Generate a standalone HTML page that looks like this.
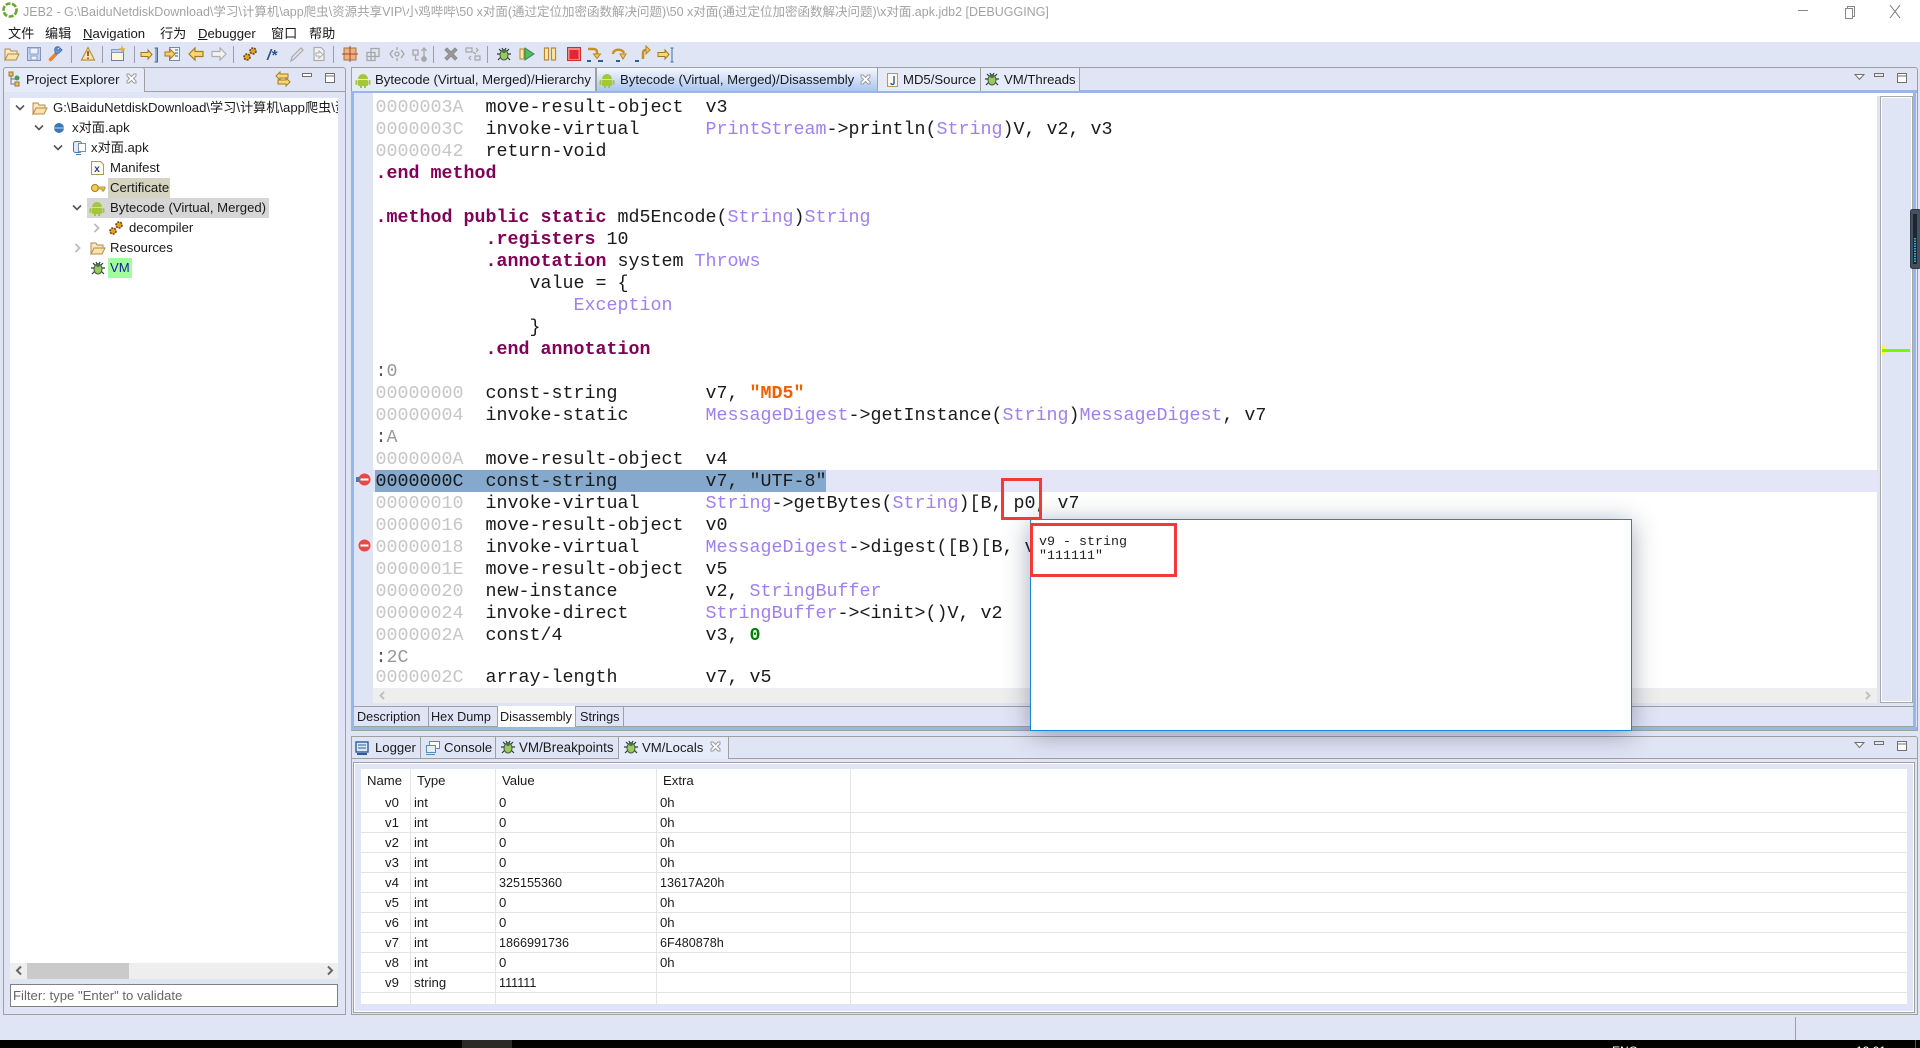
<!DOCTYPE html>
<html lang="zh">
<head>
<meta charset="utf-8">
<title>JEB2</title>
<style>
html,body{margin:0;padding:0;width:1920px;height:1048px;overflow:hidden;background:#e0e5f5;font-family:"Liberation Sans","Noto Sans CJK SC",sans-serif;font-size:13px;color:#1a1a1a}
div,span{box-sizing:border-box}
.a{position:absolute}
.t{position:absolute;white-space:pre;height:20px;line-height:20px;font-size:13.15px}
.c{position:absolute;left:375.500px;height:22px;line-height:22px;white-space:pre;font-family:"Liberation Mono",monospace;font-size:18.33px;color:#1a1a1a;margin-top:2px}
.g{color:#c6c6c6}.p{color:#a080f0}.d{color:#7f0055;font-weight:bold}.s{color:#f06000;font-weight:bold}.n{color:#008000;font-weight:bold}
.m{font-size:12.6px}
.vl{position:absolute;width:1px;background:#e4e4e4;top:769px;height:235px}
.hl{position:absolute;left:361px;width:1546px;height:1px;background:#e4e4e4}
.tab{position:absolute;border:1px solid #a0a0a0;border-bottom:0}
</style>
</head>
<body>
<!-- title + menu -->
<div class="a" style="left:0;top:0;width:1920px;height:42px;background:#fff"></div>
<div class="t" style="left:23px;top:2px;color:#a3a3a3;font-size:12.5px">JEB2 - G:\BaiduNetdiskDownload\学习\计算机\app爬虫\资源共享VIP\小鸡哔哔\50 x对面(通过定位加密函数解决问题)\50 x对面(通过定位加密函数解决问题)\x对面.apk.jdb2 [DEBUGGING]</div>
<div class="t" style="left:8px;top:24px">文件</div>
<div class="t" style="left:45px;top:24px">编辑</div>
<div class="t" style="left:83px;top:24px"><u>N</u>avigation</div>
<div class="t" style="left:160px;top:24px">行为</div>
<div class="t" style="left:198px;top:24px"><u>D</u>ebugger</div>
<div class="t" style="left:271px;top:24px">窗口</div>
<div class="t" style="left:309px;top:24px">帮助</div>

<!-- left panel -->
<div class="a" style="left:3px;top:67px;width:343px;height:948px;border:1px solid #a0a0a0;border-radius:3px 3px 0 0"></div>
<div class="a" style="left:4px;top:91px;width:341px;height:1px;background:#a0a0a0"></div>
<div class="tab" style="left:3px;top:67px;width:142px;height:25px;background:#e6ebf9;border-radius:3px 3px 0 0"></div>
<div class="t" style="left:26px;top:70px">Project Explorer</div>
<div class="a" style="left:10px;top:98px;width:328px;height:865px;background:#fff"></div>
<div class="a" style="left:10px;top:963px;width:328px;height:16px;background:#eee"></div>
<div class="a" style="left:27px;top:963px;width:102px;height:16px;background:#cacaca"></div>
<div class="a" style="left:10px;top:984px;width:328px;height:23px;background:#fff;border:1px solid #808080"></div>
<div class="t" style="left:13px;top:986px;color:#666">Filter: type "Enter" to validate</div>
<div class="a" style="left:108px;top:178px;width:62px;height:20px;background:#d4d4c0"></div>
<div class="a" style="left:87px;top:198px;width:182px;height:20px;background:#d6d6d6"></div>
<div class="a" style="left:108px;top:258px;width:24px;height:20px;background:#a0ffa0"></div>
<div class="a" style="left:53px;top:98px;width:285px;height:20px;overflow:hidden"><span class="t" style="left:0;top:0">G:\BaiduNetdiskDownload\学习\计算机\app爬虫\资源共享VIP</span></div>
<div class="t" style="left:72px;top:118px">x对面.apk</div>
<div class="t" style="left:91px;top:138px">x对面.apk</div>
<div class="t" style="left:110px;top:158px">Manifest</div>
<div class="t" style="left:110px;top:178px">Certificate</div>
<div class="t" style="left:110px;top:198px">Bytecode (Virtual, Merged)</div>
<div class="t" style="left:129px;top:218px">decompiler</div>
<div class="t" style="left:110px;top:238px">Resources</div>
<div class="t" style="left:110px;top:258px;color:#1a1a9a">VM</div>

<!-- editor panel -->
<div class="a" style="left:351px;top:67px;width:1567px;height:664px;border:1px solid #a0a0a0;border-radius:3px 3px 0 0"></div>
<div class="a" style="left:351px;top:90px;width:1566px;height:3px;background:#9ab6e8"></div>
<div class="a" style="left:351px;top:90px;width:3px;height:640px;background:#9ab6e8"></div>
<div class="a" style="left:1913px;top:90px;width:3px;height:640px;background:#9ab6e8"></div>
<div class="a" style="left:351px;top:727px;width:1566px;height:3px;background:#9ab6e8"></div>
<div class="a" style="left:354px;top:706px;width:1560px;height:1px;background:#a0a0a0"></div>
<div class="a" style="left:354px;top:726px;width:1560px;height:1px;background:#a0a0a0"></div>
<div class="tab" style="left:351px;top:67px;width:245px;height:24px;background:#e6ebf9"></div>
<div class="tab" style="left:596px;top:67px;width:282px;height:24px;background:linear-gradient(#f4f7ff,#a9c5f0)"></div>
<div class="tab" style="left:877px;top:67px;width:104px;height:24px;background:#e6ebf9"></div>
<div class="tab" style="left:980px;top:67px;width:100px;height:24px;background:#e6ebf9"></div>
<div class="t" style="left:375px;top:70px">Bytecode (Virtual, Merged)/Hierarchy</div>
<div class="t" style="left:620px;top:70px">Bytecode (Virtual, Merged)/Disassembly</div>
<div class="t" style="left:903px;top:70px">MD5/Source</div>
<div class="t" style="left:1004px;top:70px">VM/Threads</div>

<div class="a" style="left:354px;top:93px;width:1559px;height:613px;background:#e0e5f5"></div>
<div class="a" style="left:373px;top:96px;width:1504px;height:592px;background:#fff"></div>
<div class="a" style="left:373px;top:93px;width:1540px;height:3px;background:#fff"></div>
<div class="a" style="left:373px;top:470px;width:1504px;height:22px;background:#e4e6f8"></div>
<div class="a" style="left:375px;top:470px;width:451px;height:22px;background:#84a9cc"></div>
<div class="a" style="left:373px;top:688px;width:1504px;height:15px;background:#eee"></div>
<div class="a" style="left:1880px;top:96px;width:33px;height:607px;background:#e0e5f5;border:1px solid #a8a8a8;box-shadow:inset 0 0 0 1px #fff"></div>
<div class="a" style="left:1882px;top:349px;width:28px;height:3px;background:#70ff00"></div>

<div class="c" style="top:95px"><span class="g">0000003A</span>  move-result-object  v3</div>
<div class="c" style="top:117px"><span class="g">0000003C</span>  invoke-virtual      <span class="p">PrintStream</span>-&gt;println(<span class="p">String</span>)V, v2, v3</div>
<div class="c" style="top:139px"><span class="g">00000042</span>  return-void</div>
<div class="c d" style="top:161px">.end method</div>
<div class="c" style="top:205px"><span class="d">.method public static</span> md5Encode(<span class="p">String</span>)<span class="p">String</span></div>
<div class="c" style="top:227px">          <span class="d">.registers</span> 10</div>
<div class="c" style="top:249px">          <span class="d">.annotation</span> system <span class="p">Throws</span></div>
<div class="c" style="top:271px">              value = {</div>
<div class="c" style="top:293px">                  <span class="p">Exception</span></div>
<div class="c" style="top:315px">              }</div>
<div class="c" style="top:337px">          <span class="d">.end annotation</span></div>
<div class="c" style="top:359px"><span style="color:#555">:</span><span class="g" style="color:#999">0</span></div>
<div class="c" style="top:381px"><span class="g">00000000</span>  const-string        v7, <span class="s">"MD5"</span></div>
<div class="c" style="top:403px"><span class="g">00000004</span>  invoke-static       <span class="p">MessageDigest</span>-&gt;getInstance(<span class="p">String</span>)<span class="p">MessageDigest</span>, v7</div>
<div class="c" style="top:425px"><span style="color:#555">:</span><span class="g" style="color:#999">A</span></div>
<div class="c" style="top:447px"><span class="g">0000000A</span>  move-result-object  v4</div>
<div class="c" style="top:469px">0000000C  const-string        v7, "UTF-8"</div>
<div class="c" style="top:491px"><span class="g">00000010</span>  invoke-virtual      <span class="p">String</span>-&gt;getBytes(<span class="p">String</span>)[B, p0, v7</div>
<div class="c" style="top:513px"><span class="g">00000016</span>  move-result-object  v0</div>
<div class="c" style="top:535px"><span class="g">00000018</span>  invoke-virtual      <span class="p">MessageDigest</span>-&gt;digest([B)[B, v</div>
<div class="c" style="top:557px"><span class="g">0000001E</span>  move-result-object  v5</div>
<div class="c" style="top:579px"><span class="g">00000020</span>  new-instance        v2, <span class="p">StringBuffer</span></div>
<div class="c" style="top:601px"><span class="g">00000024</span>  invoke-direct       <span class="p">StringBuffer</span>-&gt;&lt;init&gt;()V, v2</div>
<div class="c" style="top:623px"><span class="g">0000002A</span>  const/4             v3, <span class="n">0</span></div>
<div class="c" style="top:645px"><span style="color:#555">:</span><span class="g" style="color:#999">2C</span></div>
<div class="c" style="top:665px;height:23px;overflow:hidden"><span class="g">0000002C</span>  array-length        v7, v5</div>

<!-- subtabs -->
<div class="a" style="left:497px;top:706px;width:79px;height:21px;background:#fff;border-left:1px solid #a0a0a0;border-right:1px solid #a0a0a0"></div>
<div class="a" style="left:428px;top:707px;width:1px;height:20px;background:#a0a0a0"></div>
<div class="a" style="left:623px;top:707px;width:1px;height:20px;background:#a0a0a0"></div>
<div class="t" style="left:357px;top:707px;font-size:12.7px">Description</div>
<div class="t" style="left:431px;top:707px;font-size:12.7px">Hex Dump</div>
<div class="t" style="left:500px;top:707px;font-size:12.7px">Disassembly</div>
<div class="t" style="left:580px;top:707px;font-size:12.7px">Strings</div>

<!-- bottom panel -->
<div class="a" style="left:351px;top:736px;width:1567px;height:279px;border:1px solid #a0a0a0;border-radius:3px 3px 0 0"></div>
<div class="a" style="left:352px;top:758px;width:1565px;height:1px;background:#a0a0a0"></div>
<div class="a" style="left:353px;top:762px;width:1562px;height:251px;border:1px solid #a0a0a0;box-shadow:inset 0 0 0 1px #fff"></div>
<div class="tab" style="left:351px;top:736px;width:70px;height:22px;background:#e0e5f5"></div>
<div class="tab" style="left:420px;top:736px;width:76px;height:22px;background:#e0e5f5"></div>
<div class="tab" style="left:495px;top:736px;width:124px;height:22px;background:#e0e5f5"></div>
<div class="tab" style="left:618px;top:736px;width:111px;height:23px;background:#e6ebf9"></div>
<div class="t" style="left:375px;top:738px">Logger</div>
<div class="t" style="left:444px;top:738px">Console</div>
<div class="t" style="left:519px;top:738px;font-size:13.4px">VM/Breakpoints</div>
<div class="t" style="left:642px;top:738px">VM/Locals</div>
<div class="a" style="left:361px;top:769px;width:1546px;height:235px;background:#fff"></div>
<div class="vl" style="left:410px"></div><div class="vl" style="left:495px"></div><div class="vl" style="left:656px"></div><div class="vl" style="left:850px"></div>
<div class="hl" style="top:812px"></div><div class="hl" style="top:832px"></div><div class="hl" style="top:852px"></div><div class="hl" style="top:872px"></div><div class="hl" style="top:892px"></div><div class="hl" style="top:912px"></div><div class="hl" style="top:932px"></div><div class="hl" style="top:952px"></div><div class="hl" style="top:972px"></div><div class="hl" style="top:992px"></div>
<div class="t" style="left:367px;top:771px">Name</div><div class="t" style="left:417px;top:771px">Type</div><div class="t" style="left:502px;top:771px">Value</div><div class="t" style="left:663px;top:771px">Extra</div>
<div class="t" style="left:385px;top:793px">v0</div><div class="t" style="left:414px;top:793px">int</div><div class="t" style="left:499px;top:793px">0</div><div class="t" style="left:660px;top:793px">0h</div>
<div class="t" style="left:385px;top:813px">v1</div><div class="t" style="left:414px;top:813px">int</div><div class="t" style="left:499px;top:813px">0</div><div class="t" style="left:660px;top:813px">0h</div>
<div class="t" style="left:385px;top:833px">v2</div><div class="t" style="left:414px;top:833px">int</div><div class="t" style="left:499px;top:833px">0</div><div class="t" style="left:660px;top:833px">0h</div>
<div class="t" style="left:385px;top:853px">v3</div><div class="t" style="left:414px;top:853px">int</div><div class="t" style="left:499px;top:853px">0</div><div class="t" style="left:660px;top:853px">0h</div>
<div class="t" style="left:385px;top:873px">v4</div><div class="t" style="left:414px;top:873px">int</div><div class="t m" style="left:499px;top:873px">325155360</div><div class="t m" style="left:660px;top:873px">13617A20h</div>
<div class="t" style="left:385px;top:893px">v5</div><div class="t" style="left:414px;top:893px">int</div><div class="t" style="left:499px;top:893px">0</div><div class="t" style="left:660px;top:893px">0h</div>
<div class="t" style="left:385px;top:913px">v6</div><div class="t" style="left:414px;top:913px">int</div><div class="t" style="left:499px;top:913px">0</div><div class="t" style="left:660px;top:913px">0h</div>
<div class="t" style="left:385px;top:933px">v7</div><div class="t" style="left:414px;top:933px">int</div><div class="t m" style="left:499px;top:933px">1866991736</div><div class="t m" style="left:660px;top:933px">6F480878h</div>
<div class="t" style="left:385px;top:953px">v8</div><div class="t" style="left:414px;top:953px">int</div><div class="t" style="left:499px;top:953px">0</div><div class="t" style="left:660px;top:953px">0h</div>
<div class="t" style="left:385px;top:973px">v9</div><div class="t" style="left:414px;top:973px">string</div><div class="t m" style="left:499px;top:973px">111111</div>

<!-- status + taskbar -->
<div class="a" style="left:1795px;top:1017px;width:1px;height:23px;background:#a0a0a0"></div>
<div class="a" style="left:0;top:1040px;width:1920px;height:8px;background:#000;overflow:hidden">
  <div class="a" style="left:462px;top:0;width:50px;height:8px;background:#2a2a2a"></div>
  <div class="t" style="left:1612px;top:1px;color:#fff;font-size:12px">ENG</div>
  <div class="t" style="left:1856px;top:1px;color:#fff;font-size:12px">12:01</div>
  <div class="a" style="left:1915px;top:0;width:1px;height:8px;background:#555"></div>
</div>

<!-- icon overlay -->
<svg class="a" style="left:0;top:0" width="1920" height="1048" viewBox="0 0 1920 1048" fill="none">
<defs>
<g id="bug"><path d="M3 3l3 3M13 3l-3 3M1 8h3M15 8h-3M2 14l3-3M14 14l-3-3M6 2l1 2M10 2L9 4" stroke="#2c3c34" stroke-width="1.2"/><ellipse cx="8" cy="9" rx="4" ry="5" fill="#9cc860" stroke="#3c5c3c"/><circle cx="8" cy="5" r="2" fill="#4c6c54"/></g>
<g id="droid"><path d="M3 7a5 5 0 0 1 10 0z" fill="#a4c639"/><rect x="3" y="8" width="10" height="6" rx="1" fill="#a4c639"/><rect x="0.5" y="8" width="2" height="5" rx="1" fill="#a4c639"/><rect x="13.5" y="8" width="2" height="5" rx="1" fill="#a4c639"/><rect x="5" y="13" width="2" height="3" fill="#a4c639"/><rect x="9" y="13" width="2" height="3" fill="#a4c639"/></g>
<g id="folder"><path d="M1 3h5l1 2h6v3H5l-4 6z" fill="#f8e6c4" stroke="#b08c4c"/><path d="M4 8h11l-3 6H1z" fill="#fae2a8" stroke="#b08c4c"/></g>
<g id="gears"><circle cx="5" cy="11" r="3" fill="#e8a020" stroke="#6a4a10" stroke-width="1.6" stroke-dasharray="2 1"/><circle cx="11" cy="5" r="3" fill="#e8a020" stroke="#6a4a10" stroke-width="1.6" stroke-dasharray="2 1"/></g>
<g id="close"><path d="M1 1l2 0 2.500 2.500L8 1h2v2L7.500 5.500 10 8v2H8L5.500 7.500 3 10H1V8l2.500-2.500L1 3z" fill="#fff" stroke="#9a9a9a"/></g>
<g id="monitor"><rect x="1" y="1" width="12" height="10" fill="#dce8f8" stroke="#2c5c9c" stroke-width="1.4"/><path d="M3 4h8M3 7h8" stroke="#2c5c9c"/><path d="M2 13h10" stroke="#2c5c9c" stroke-width="2"/></g>
</defs>

<!-- app logo -->
<circle cx="10" cy="10" r="6.500" stroke="#6aa82c" stroke-width="2.600" stroke-dasharray="5 1.500"/>
<!-- window controls -->
<path d="M1798 10.500h10" stroke="#888"/><path d="M1845.500 8.500h7v10h-7zM1847.500 8.500v-2h7v10h-2" stroke="#888"/><path d="M1890 5l10 13M1900 5l-10 13" stroke="#777"/>

<!-- toolbar -->
<g stroke="#9a9eaa"><path d="M71.500 46v17M102.500 46v17M134.500 46v17M233.500 46v17M333.500 46v17M433.500 46v17M487.500 46v17"/></g>
<use href="#folder" x="4" y="46"/>
<g transform="translate(26 46)"><rect x="1.500" y="1.500" width="13" height="13" fill="#c4d4ec" stroke="#7a94bc"/><rect x="4" y="2" width="8" height="6" fill="#eef2fa" stroke="#8aa0c0"/><rect x="5" y="10" width="6" height="4" fill="#eef2fa" stroke="#8aa0c0"/></g>
<g transform="translate(48 46)"><path d="M2.500 13.500L8 8" stroke="#ee8426" stroke-width="3.500" stroke-linecap="round"/><path d="M8 8l3-1 3-3-2-2-1 2-2 0 0-2 2-1c-3-1-5 1-4 5z" fill="#6c9ad6" stroke="#4672b0"/></g>
<g transform="translate(80 46)"><path d="M8 1.500L14.500 14h-13z" fill="#fbe7ad" stroke="#b89040" stroke-width="1.200"/><path d="M8 5v5M8 11.500v1.500" stroke="#a85020" stroke-width="1.800"/></g>
<g transform="translate(110 46)"><rect x="1.500" y="3.500" width="12" height="11" fill="#fdf7da" stroke="#6f8094"/><rect x="1.500" y="3.500" width="12" height="3" fill="#c0d4ec" stroke="#8a9ab0"/><path d="M12 0v6M9 3h6" stroke="#e8b030" stroke-width="1.500"/></g>
<g transform="translate(140 46)"><path d="M1 6.500h7V4l4 4.500L8 13v-2.500H1z" fill="#fcd870" stroke="#9c7820"/><path d="M13 2h3v14h-3M14.500 2v14" stroke="#3c6ca8" transform="translate(1.500 0)"/></g>
<g transform="translate(164 46)"><rect x="5.500" y="1.500" width="10" height="13" fill="#f2f5fb" stroke="#7c8aa0"/><path d="M11 4h3M11 7h3M11 10h3" stroke="#2c5c9c"/><path d="M1 6h5V3l5 5-5 5v-3H1z" fill="#fcd060" stroke="#a07820"/></g>
<path transform="translate(188 46)" d="M1 8l6-6v3.500h8v5H7V14z" fill="#fcd670" stroke="#a67c20" stroke-width="1.200"/>
<path transform="translate(211 46)" d="M15 8L9 2v3.500H1v5h8V14z" fill="#f3f3f3" stroke="#aeaeae" stroke-width="1.200"/>
<use href="#gears" x="242" y="46"/>
<text x="267" y="60" font-family="Liberation Sans" font-size="15" font-weight="bold" font-style="italic" fill="#2c5488">/*</text>
<g transform="translate(289 46)"><path d="M2 15l1-4L12 2l2 2-9 9z" fill="#e8e8e8" stroke="#a8a8a8" stroke-width="1.200"/></g>
<g transform="translate(311 46)"><path d="M3 1.500h7l3 3v10H3z" fill="#f2f2f2" stroke="#acacac" stroke-width="1.200"/><path d="M5 7h3V5l4 3.500L8 12v-2H5z" fill="#f8f8f8" stroke="#acacac"/></g>
<g transform="translate(342 46)"><rect x="2" y="2" width="12" height="12" fill="#eab27c" stroke="#a87440"/><path d="M8 0v16M0 8h16" stroke="#b0402c"/></g>
<g transform="translate(365 46)" stroke="#a6a6a6" stroke-width="1.300"><path d="M6 2.500h8v8H6zM2 6.500h8v8H2zM6 2.500v12M2 10.500h12"/></g>
<g transform="translate(389 46)" stroke="#a6a6a6" stroke-width="1.300"><path d="M4 4L1 8l3 4M12 4l3 4-3 4"/><circle cx="8" cy="8" r="2"/><path d="M8 1v3M8 12v3"/></g>
<g transform="translate(412 46)" stroke="#a6a6a6" stroke-width="1.300"><path d="M1 4h5v5H1zM3.500 9v5h3M12 14V3M9.500 5L12 2l2.500 3"/><circle cx="12" cy="13" r="2.200" fill="#a6a6a6"/></g>
<path transform="translate(443 46)" d="M2 4l2-2 4 4 4-4 2 2-4 4 4 4-2 2-4-4-4 4-2-2 4-4z" fill="#9a9a9a" stroke="#8c8c8c"/>
<g transform="translate(465 46)" stroke="#a6a6a6" stroke-width="1.200"><path d="M1 2h6v4H1zM10 10h5v4h-5zM8 6l3 2M11 2l2 2-2 2M6 10L4 12l2 2"/></g>
<use href="#bug" x="496" y="46"/>
<g transform="translate(519 46)"><rect x="1" y="3" width="4" height="10" fill="#fbe9a9" stroke="#b8882c"/><path d="M6 2l9 6-9 6z" fill="#58b868" stroke="#2c8c48"/></g>
<g transform="translate(542 46)" fill="#fbe9a9" stroke="#b8882c" stroke-width="1.200"><rect x="2.500" y="2" width="4" height="12"/><rect x="9.500" y="2" width="4" height="12"/></g>
<g transform="translate(566 46)"><rect x="1.500" y="1.500" width="13" height="13" fill="#f08a8a" stroke="#d02c2c"/><rect x="3.500" y="4" width="9" height="9" fill="#e82434"/></g>
<g transform="translate(587 46)"><path d="M1 3h5c3 0 4 1 4 3v3" stroke="#c8901c" stroke-width="2.500"/><path d="M6.500 8h7L10 12.500z" fill="#f0c860" stroke="#b8861c"/><path d="M0 15h4M11 15h5" stroke="#2c5c9c" stroke-width="2"/></g>
<g transform="translate(611 46)"><path d="M2 8C2 3 11 2 13 7" stroke="#c8901c" stroke-width="2.500"/><path d="M9 8h6l-3 5z" fill="#f0c860" stroke="#b8861c"/><path d="M5 15h4" stroke="#2c5c9c" stroke-width="2"/></g>
<g transform="translate(635 46)"><path d="M8 13V7c0-2 1-3 3-3" stroke="#c8901c" stroke-width="2.500"/><path d="M11 0l4 4-4 4z" fill="#f0c860" stroke="#b8861c"/><path d="M0 15h4" stroke="#2c5c9c" stroke-width="2"/></g>
<g transform="translate(657 46)"><path d="M1 6.500h7V4l4 4.500L8 13v-2.500H1z" fill="#fcd870" stroke="#9c7820"/><path d="M13.500 2h3M13.500 16h3M15 2v14" stroke="#3c6ca8"/></g>

<!-- project explorer tab + view controls -->
<g transform="translate(8 71)"><path d="M3 4v9h5M3 8h5" stroke="#7a7a7a"/><rect x="1" y="1" width="4" height="4" fill="#e8c060" stroke="#9a7a30"/><circle cx="9" cy="7" r="2.500" fill="#4a9a5a"/><rect x="7" y="11" width="4" height="4" fill="#e8c060" stroke="#9a7a30"/></g>
<use href="#close" x="126" y="73"/>
<g transform="translate(275 71)"><path d="M1 5l4-4v2h8v4H5v2z" fill="#fcd670" stroke="#a67c20"/><path d="M15 11l-4-4v2H3v4h8v2z" fill="#fcd670" stroke="#a67c20"/></g>
<rect x="302.500" y="73.500" width="9" height="3" fill="#fff" stroke="#707070"/>
<path d="M325.500 73.500h9v9h-9zM325.500 76h9" stroke="#707070" fill="#fff"/>

<!-- tree -->
<g stroke="#555" stroke-width="1.600"><path d="M16 105.500l4 4 4-4M35 125.500l4 4 4-4M54 145.500l4 4 4-4M73 205.500l4 4 4-4"/></g>
<g stroke="#bbb" stroke-width="1.800"><path d="M94.500 224l4 4-4 4M75.500 244l4 4-4 4"/></g>
<use href="#folder" x="32" y="100"/>
<circle cx="59" cy="128" r="5" fill="#3a78b8"/><path d="M54 128h10" stroke="#bcd4ec"/>
<g transform="translate(71 140)"><rect x="2.500" y="1.500" width="8" height="11" rx="2" fill="#dfe8f4" stroke="#4a78a8"/><rect x="7.500" y="3.500" width="7" height="8" fill="#fff" stroke="#7a8ea8"/><path d="M5 14.500h5" stroke="#4a78a8"/></g>
<g transform="translate(90 160)"><path d="M1.500 1.500h9l3 3v10h-12z" fill="#fffdf0" stroke="#a89868"/><text x="4" y="12" font-family="Liberation Mono" font-size="10" font-weight="bold" fill="#2c3c8c">x</text></g>
<g transform="translate(90 180)"><circle cx="5" cy="8" r="3.500" fill="#f4cc50" stroke="#a07c20"/><path d="M8 7h7v2h-1v2h-2V9H8z" fill="#f4cc50" stroke="#a07c20" stroke-width=".7"/></g>
<use href="#droid" x="89" y="200"/>
<use href="#gears" x="108" y="220"/>
<use href="#folder" x="90" y="240"/>
<use href="#bug" x="90" y="260"/>

<!-- editor tabs icons -->
<use href="#droid" x="355" y="72"/>
<use href="#droid" x="599" y="72"/>
<use href="#close" x="860" y="74"/>
<g transform="translate(885 72)"><path d="M2.500 1.500h10v13h-10z" fill="#fffbe8" stroke="#b89a58"/><path d="M9 4v7c0 2-3 2-3 0" stroke="#2c5c9c" stroke-width="1.400"/></g>
<use href="#bug" x="984" y="71"/>
<path d="M1855 74.500h9l-4.500 5z" fill="#fff" stroke="#707070"/>
<rect x="1874.500" y="73.500" width="9" height="3" fill="#e8e8e8" stroke="#707070"/>
<path d="M1897.500 73.500h9v9h-9zM1897.500 76h9" stroke="#707070" fill="#fff"/>

<!-- overview ruler marks + side widget -->
<path d="M1882 345l6 5-6 5z" fill="#ffff00"/>
<path d="M1882 349h28v3h-28z" fill="#70ff00"/>
<rect x="1910.500" y="209.500" width="10" height="59" rx="2" fill="#43515f" stroke="#2e3a44"/>
<rect x="1913" y="214" width="4" height="50" fill="#1c2530"/>
<path d="M1915 238v25" stroke="#30a8d8" stroke-width="2" stroke-dasharray="1.500 1"/>

<!-- editor annotations -->
<circle cx="364.500" cy="479.500" r="6" fill="#e84848"/><path d="M360.500 479.500h8" stroke="#fff" stroke-width="2"/>
<path d="M356 477v5h3v-5z" fill="#4a7ab0"/>
<circle cx="364.500" cy="545.500" r="6" fill="#e84848"/><path d="M360.500 545.500h8" stroke="#fff" stroke-width="2"/>
<path d="M384 692l-3.500 3.500 3.500 3.500" stroke="#c0c0c0" stroke-width="2"/>
<path d="M1866 692l3.500 3.500-3.500 3.500" stroke="#c0c0c0" stroke-width="2"/>

<!-- left scrollbar arrows -->
<path d="M21 966.500l-4 4 4 4" stroke="#666" stroke-width="2"/><path d="M328 966.500l4 4-4 4" stroke="#666" stroke-width="2"/>

<!-- bottom tabs icons -->
<use href="#monitor" x="355" y="741"/>
<g transform="translate(425 740)"><rect x="4.500" y="1.500" width="10" height="7" fill="#fff" stroke="#5c88bc"/><rect x="1.500" y="5.500" width="9" height="7" fill="#e4eef8" stroke="#5c88bc"/><path d="M1 14.500h9" stroke="#5c88bc"/></g>
<use href="#bug" x="500" y="739"/>
<use href="#bug" x="623" y="739"/>
<use href="#close" x="710" y="741"/>
<path d="M1855 742.500h9l-4.500 5z" fill="#fff" stroke="#707070"/>
<rect x="1874.500" y="741.500" width="9" height="3" fill="#e8e8e8" stroke="#707070"/>
<path d="M1897.500 741.500h9v9h-9zM1897.500 744h9" stroke="#707070" fill="#fff"/>
</svg>

<!-- hover popup -->
<div class="a" style="left:1030px;top:519px;width:602px;height:212px;background:#fff;border:1px solid #1a86d9;box-shadow:0 4px 24px rgba(40,50,80,.42)"></div>
<div class="a" style="left:1039px;top:536px;white-space:pre;font-family:'Liberation Mono',monospace;font-size:13.33px;line-height:14px;color:#222">v9 - string
"111111"</div>
<!-- red annotation boxes -->
<div class="a" style="left:1001px;top:478px;width:41px;height:42px;border:3px solid #f33838"></div>
<div class="a" style="left:1030px;top:523px;width:147px;height:54px;border:3px solid #f33838"></div>
</body>
</html>
